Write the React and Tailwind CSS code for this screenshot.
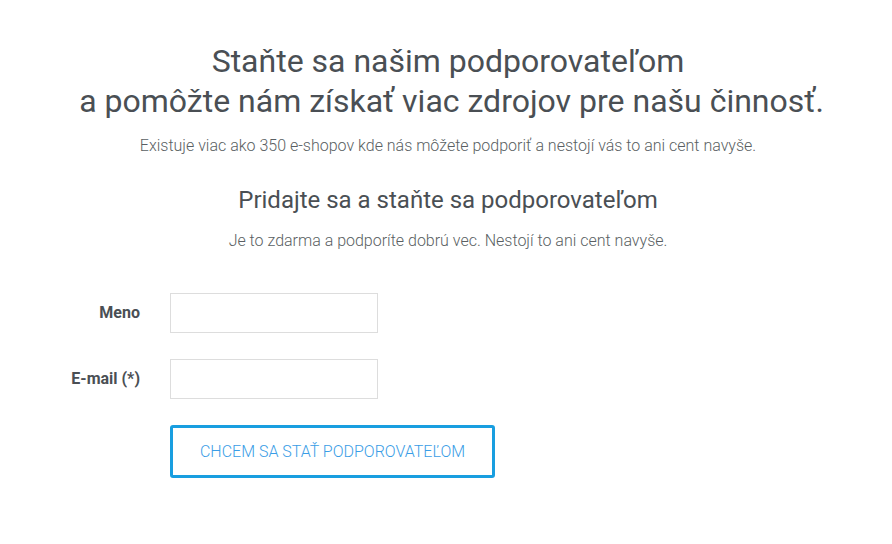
import React from 'react';

function Field({ label, id, type = 'text' }) {
  return (
    <div className="flex items-center">
      <label htmlFor={id} className="w-[140px] text-right text-[16px] font-bold text-[#4a4f54]">
        {label}
      </label>
      <input
        id={id}
        type={type}
        className="ml-[30px] h-[40px] w-[208px] border border-[#dddddd] bg-white px-2 text-[16px] outline-none"
      />
    </div>
  );
}

export default function App() {
  return (
    <div className="min-h-[544px] w-full bg-white font-['Roboto',sans-serif] text-[#4a4f54]">
      <div className="pl-[4px] pt-[41px] text-center">
        <h1 className="text-[32px] font-normal leading-[40px] text-[#4a4f54]">
          <span className="block">Staňte sa našim podporovateľom</span>
          <span className="block pl-[7px]">a pomôžte nám získať viac zdrojov pre našu činnosť.</span>
        </h1>
        <p className="mt-[13px] text-[16px] font-light leading-[24px] text-[#5a5f63]">
          Existuje viac ako 350 e-shopov kde nás môžete podporiť a nestojí vás to ani cent navyše.
        </p>
        <h2 className="mt-[27px] text-[24px] font-normal leading-[30px] text-[#4a4f54]">
          Pridajte sa a staňte sa podporovateľom
        </h2>
        <p className="mt-[14px] text-[16px] font-light leading-[24px] text-[#5a5f63]">
          Je to zdarma a podporíte dobrú vec. Nestojí to ani cent navyše.
        </p>
      </div>

      <form className="mt-[40px] flex flex-col gap-[26px]" onSubmit={(e) => e.preventDefault()}>
        <Field label="Meno" id="meno" />
        <Field label="E-mail (*)" id="email" type="email" />
        <div className="pl-[170px]">
          <button
            type="submit"
            className="h-[53px] w-[325px] rounded-[3px] border-[3px] border-[#189ee0] bg-white text-[16px] font-light uppercase text-[#3a9de6]"
          >
            Chcem sa stať podporovateľom
          </button>
        </div>
      </form>
    </div>
  );
}
